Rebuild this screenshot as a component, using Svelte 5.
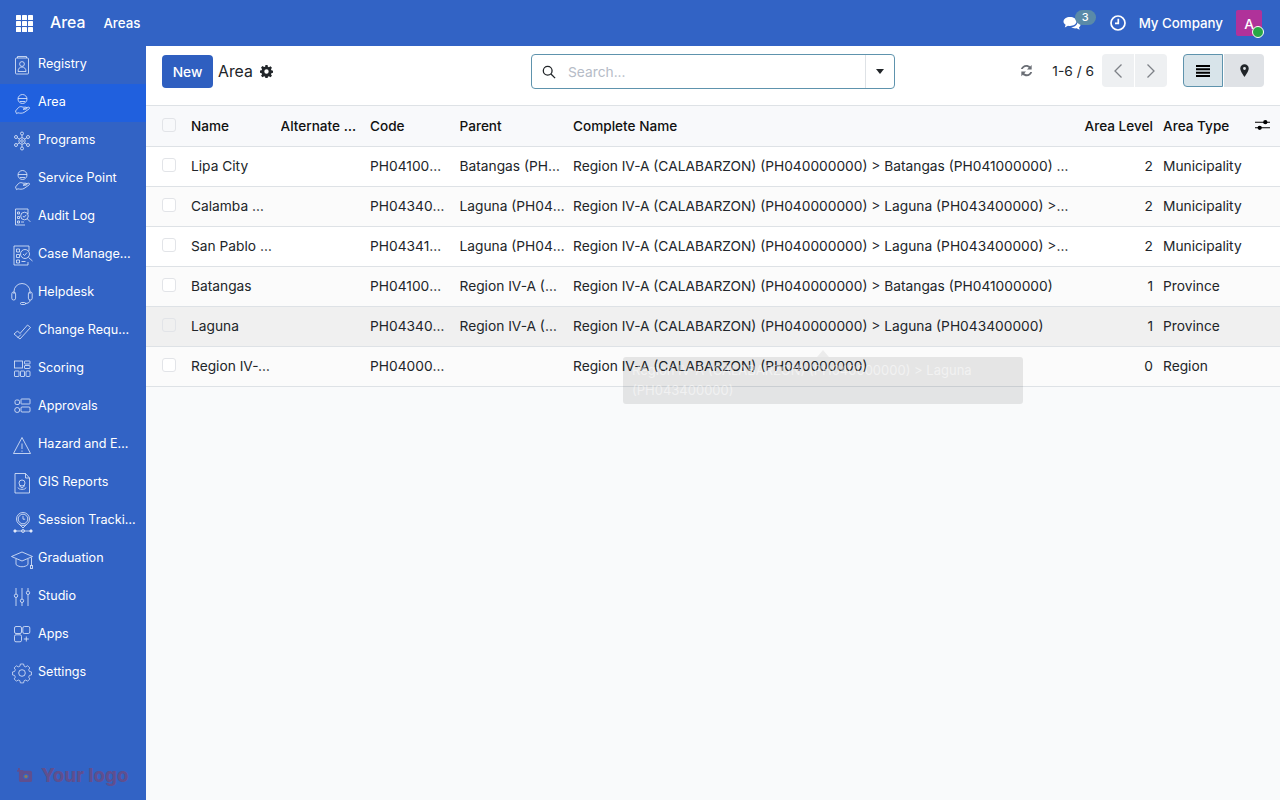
<script lang="ts">
	const hand = '<circle cx="12.500" cy="8" r="4.500"/><path d="M8 7.500h9M10 10.500h5"/><path d="M5.500 20l3-3.500c1.500-1.200 3-1 4.500-.3h3c1.200 0 1.200 2 0 2h-3l5-2c1.500-.5 2.200 1 1 1.800l-5 3.500c-2 1-4 .8-6 .3l-1.500.8z"/>';

	const menu = [
		{ label: 'Registry', icon: '<rect x="5.5" y="5" width="13" height="16" rx="1"/><path d="M7.500 5V3.500h9V5"/><circle cx="12" cy="11" r="2.400"/><path d="M8 18.500c0-3 1.800-4.500 4-4.500s4 1.500 4 4.500z"/>' },
		{ label: 'Area', active: true, icon: hand },
		{ label: 'Programs', icon: '<circle cx="12" cy="12" r="3.200"/><circle cx="12" cy="12" r="1.300"/><circle cx="12" cy="4.500" r="1.500"/><circle cx="12" cy="19.500" r="1.500"/><circle cx="6" cy="8" r="1.500"/><circle cx="18" cy="8" r="1.500"/><circle cx="6" cy="16" r="1.500"/><circle cx="18" cy="16" r="1.500"/><path d="M12 6v3M12 15v3M7.300 8.800l2 1.300M16.700 8.800l-2 1.300M7.300 15.200l2-1.300M16.700 15.200l-2-1.300"/>' },
		{ label: 'Service Point', icon: hand },
		{ label: 'Audit Log', icon: '<path d="M18 9V4H5.500v16H15"/><path d="M7.500 7h2v2h-2zM7.500 11.500h2v2h-2zM7.500 16h2v2h-2zM11 17h3"/><circle cx="14.500" cy="11" r="3.800"/><path d="M12.900 11l1.200 1.300 2.200-2.500M17.300 13.800l3 3"/>' },
		{ label: 'Case Management', icon: '<path d="M19 8V3H4v19h14v-3"/><path d="M6.500 6h3v3h-3zM6.500 11.500h3v3h-3zM6.500 17h3v3h-3zM11.500 18.500h4"/><circle cx="15" cy="11" r="4.500"/><path d="M13 11l1.500 1.500 2.500-3M18.500 14.500l4 3.500"/>' },
		{ label: 'Helpdesk', icon: '<path d="M4 13V10.500a8 8 0 0 1 16 0V13"/><rect x="1.800" y="11" width="3.800" height="8" rx="1.800"/><rect x="18.400" y="11" width="3.800" height="8" rx="1.800"/><path d="M20 19c0 2.500-2 3.500-5 3.500"/><rect x="10.500" y="21.500" width="5" height="2" rx="1"/>' },
		{ label: 'Change Requests', icon: '<path d="M4 15l3.500-3 2.500 2.500 7.500-8.500 3 2.500L10 20z"/><path d="M7.500 19l3.500-3.500"/>' },
		{ label: 'Scoring', icon: '<rect x="4.500" y="4" width="8" height="7"/><rect x="14.500" y="4" width="5.500" height="3" rx=".5"/><rect x="14.500" y="8.500" width="5.500" height="3" rx=".5"/><rect x="4.500" y="14" width="4.500" height="5.500" rx=".5"/><rect x="10.500" y="14" width="4" height="5.500" rx=".5"/><rect x="16" y="14" width="4" height="5.500" rx="1"/>' },
		{ label: 'Approvals', icon: '<rect x="5" y="5" width="4.500" height="4.500" rx="1.500"/><rect x="11" y="4" width="9" height="5" rx=".5"/><circle cx="7.200" cy="15" r="2.500"/><rect x="11" y="12" width="9" height="5" rx="1"/>' },
		{ label: 'Hazard and Emergency', icon: '<path d="M12 4.500L3.500 20.500h17z"/><path d="M12 10.500v5.500M12 17.500v1.300"/>' },
		{ label: 'GIS Reports', icon: '<path d="M5 2.500h10.500l4 4.500v15H5zM15.500 2.500V7h4"/><circle cx="12" cy="12" r="3"/><path d="M12 17l-3-2.500M12 17l3-2.500M8 16.500c0 2.500 8 2.500 8 0"/>' },
		{ label: 'Session Tracking', icon: '<circle cx="13" cy="10" r="6.500"/><circle cx="13" cy="10" r="4.800"/><path d="M13 7v3.200h2.200M9.500 15.500l3.500 3.500 3.500-3.500M5 22h16"/><circle cx="5" cy="22" r="1.200" fill="#e4ebfa"/><circle cx="13" cy="22" r="1.500"/><circle cx="21" cy="22" r="1.200" fill="#e4ebfa"/>' },
		{ label: 'Graduation', icon: '<path d="M1.500 9.500L12 5l10.500 4.500L12 14zM6 12v5.500c3 3 9 3 12 0V12M21.500 10.500v8"/><rect x="20.500" y="18.500" width="2" height="3"/>' },
		{ label: 'Studio', icon: '<path d="M6 3v6M6 12.500V21M12 3v11M12 17.500V21M18 3v3M18 9.500V21"/><circle cx="6" cy="10.800" r="1.700"/><circle cx="12" cy="15.800" r="1.700"/><circle cx="18" cy="7.800" r="1.700"/>' },
		{ label: 'Apps', icon: '<rect x="4.500" y="3.500" width="7" height="7" rx="1.500"/><rect x="12.800" y="3.500" width="7" height="7" rx="1.500"/><rect x="4.500" y="11.800" width="7" height="7" rx="1.500"/><path d="M16.300 13.500v5M13.800 16h5"/>' },
		{ label: 'Settings', icon: '<circle cx="12" cy="12" r="3.300"/><path d="M10.200 4h3.600l.5 2.400 1.900.8 2-1.300 2.500 2.500-1.300 2 .8 1.900 2.300.5v3.400l-2.300.5-.8 1.900 1.300 2-2.500 2.500-2-1.300-1.900.8-.5 2.400h-3.600l-.5-2.400-1.900-.8-2 1.300-2.500-2.500 1.300-2-.8-1.900-2.300-.5v-3.400l2.300-.5.8-1.900-1.300-2 2.500-2.500 2 1.300 1.900-.8z" transform="translate(1.200 -.6) scale(.9)"/>' }
	];

	const rows = [
		{ name: 'Lipa City', code: 'PH041000000', parent: 'Batangas (PH041000000)', full: 'Region IV-A (CALABARZON) (PH040000000) > Batangas (PH041000000) > Lipa City (PH041014000)', level: 2, type: 'Municipality' },
		{ name: 'Calamba City', code: 'PH043400000', parent: 'Laguna (PH043400000)', full: 'Region IV-A (CALABARZON) (PH040000000) > Laguna (PH043400000) > Calamba City (PH043405000)', level: 2, type: 'Municipality' },
		{ name: 'San Pablo City', code: 'PH043412000', parent: 'Laguna (PH043400000)', full: 'Region IV-A (CALABARZON) (PH040000000) > Laguna (PH043400000) > San Pablo City (PH043412000)', level: 2, type: 'Municipality' },
		{ name: 'Batangas', code: 'PH041000000', parent: 'Region IV-A (CALABARZON)', full: 'Region IV-A (CALABARZON) (PH040000000) > Batangas (PH041000000)', level: 1, type: 'Province' },
		{ name: 'Laguna', code: 'PH043400000', parent: 'Region IV-A (CALABARZON)', full: 'Region IV-A (CALABARZON) (PH040000000) > Laguna (PH043400000)', level: 1, type: 'Province', hover: true },
		{ name: 'Region IV-A (CALABARZON)', code: 'PH040000000', parent: '', full: 'Region IV-A (CALABARZON) (PH040000000)', level: 0, type: 'Region' }
	];
</script>

<div class="app">
	<header class="navbar">
		<svg class="apps" viewBox="0 0 17 17" width="17" height="17" fill="#fff">
			{#each [0, 6, 12] as y}
				{#each [0, 6, 12] as x}
					<rect {x} {y} width="5" height="5" rx=".6" />
				{/each}
			{/each}
		</svg>
		<span class="brand">Area</span>
		<span class="navlink">Areas</span>
		<div class="systray">
			<div class="chat">
				<svg viewBox="0 0 18 15" width="18" height="15" fill="#fff">
					<path d="M7 1c3.600 0 6.500 2 6.500 4.600S10.600 10 7 10c-.8 0-1.400 0-2-.2L1.800 11.500l.8-2.700C1.200 8 .5 6.900.5 5.600.5 3 3.400 1 7 1z" />
					<path d="M14.500 5.500c1.800.6 3 1.800 3 3.300 0 1-.6 1.900-1.500 2.500l.7 2.500-3.200-1.500c-2 .3-4-.2-5.300-1.200 3.300.1 6.500-2 6.300-5.600z" />
				</svg>
				<span class="badge">3</span>
			</div>
			<svg class="clock" viewBox="0 0 16 16" width="16" height="16" fill="none" stroke="#fff" stroke-width="1.700">
				<circle cx="8" cy="8" r="7" />
				<path d="M8.300 3.800v4.600H5" />
			</svg>
			<span class="company">My Company</span>
			<div class="avatar">A<span class="online"></span></div>
		</div>
	</header>

	<div class="body">
		<nav class="sidebar">
			{#each menu as item}
				<div class="item" class:active={item.active}>
					<svg viewBox="0 0 24 24" width="24" height="24" fill="none" stroke="#e4ebfa" stroke-width=".9" stroke-opacity=".9">
						{@html item.icon}
					</svg>
					<span>{item.label}</span>
				</div>
			{/each}
			<div class="logo">
				<svg viewBox="0 0 18 16" width="17" height="15" fill="#5f4f8f">
					<path fill-rule="evenodd" d="M1 0h2v2h3l1 1h7a2 2 0 0 1 2 2v8a2 2 0 0 1-2 2H4a2 2 0 0 1-2-2V4H0V2h1zM9.500 6a3 3 0 1 0 0 6 3 3 0 0 0 0-6z" />
					<circle cx="9.500" cy="9" r="1.800" fill="#8d7a5e" />
				</svg>
				<span>Your logo</span>
			</div>
		</nav>

		<main class="content">
			<div class="panel">
				<div class="panel-left">
					<button class="new">New</button>
					<span class="title">Area</span>
					<svg viewBox="0 0 16 16" width="13" height="13" fill="#212529">
						<path fill-rule="evenodd" d="M6.700 0h2.600l.4 2.200 1.300.6 1.900-1.300 1.800 1.900-1.200 1.900.5 1.300 2.200.4v2.600l-2.200.4-.5 1.300 1.200 1.900-1.800 1.900-1.900-1.300-1.300.6-.4 2.200H6.700l-.4-2.200-1.300-.6-1.900 1.300-1.800-1.900 1.200-1.900-.5-1.300L-.2 9.400V6.800L2 6.400l.5-1.300-1.200-1.900 1.800-1.900L5 2.600l1.300-.6zM8 5.300a2.700 2.700 0 1 0 0 5.400 2.700 2.700 0 0 0 0-5.400z" />
					</svg>
				</div>
				<div class="search">
					<svg viewBox="0 0 16 16" width="14" height="14" fill="none" stroke="#212529" stroke-width="1.500">
						<circle cx="6.500" cy="6.500" r="5" />
						<path d="M10.200 10.200L15 15" />
					</svg>
					<span class="placeholder">Search...</span>
					<div class="search-drop"><span class="caret"></span></div>
				</div>
				<div class="panel-right">
					<svg class="refresh" viewBox="0 0 16 16" width="15" height="15" fill="#6a6e75">
						<path d="M2 6.500C2.700 3.700 5 2 7.800 2c1.600 0 3 .6 4.100 1.600L13.500 2v5h-5l1.900-1.900A4 4 0 0 0 7.800 4C6 4 4.600 5 4 6.500zM14 9.500c-.7 2.800-3 4.500-5.800 4.500-1.600 0-3-.6-4.100-1.600L2.500 14V9h5l-1.900 1.900A4 4 0 0 0 8.200 12c1.800 0 3.200-1 3.800-2.500z" />
					</svg>
					<span class="pager">1-6 / 6</span>
					<div class="arrows">
						<button aria-label="Previous">
							<svg viewBox="0 0 10 16" width="10" height="16" fill="none" stroke="#7d8187" stroke-width="1.300"><path d="M8.500 1.500L2 8l6.500 6.500" /></svg>
						</button>
						<button aria-label="Next">
							<svg viewBox="0 0 10 16" width="10" height="16" fill="none" stroke="#7d8187" stroke-width="1.300"><path d="M1.500 1.500L8 8l-6.500 6.500" /></svg>
						</button>
					</div>
					<div class="views">
						<button class="view on" aria-label="List">
							<svg viewBox="0 0 14 12" width="14" height="12" fill="#000"><path d="M0 0h14v2H0zM0 3.300h14v2H0zM0 6.700h14v2H0zM0 10h14v2H0z" /></svg>
						</button>
						<button class="view" aria-label="Map">
							<svg viewBox="0 0 10 14" width="9" height="13" fill="#212529"><path fill-rule="evenodd" d="M5 0a4.700 4.700 0 0 1 4.700 4.700C9.700 8 5 14 5 14S.3 8 .3 4.700A4.700 4.700 0 0 1 5 0zm0 3.200a1.600 1.600 0 1 0 0 3.200 1.600 1.600 0 0 0 0-3.200z" /></svg>
						</button>
					</div>
				</div>
			</div>

			<table>
				<colgroup>
					<col class="c-check" />
					<col class="c-text" />
					<col class="c-text" />
					<col class="c-text" />
					<col class="c-parent" />
					<col />
					<col class="c-level" />
					<col class="c-type" />
					<col class="c-opt" />
				</colgroup>
				<thead>
					<tr>
						<th class="check"><span class="box"></span></th>
						<th>Name</th>
						<th>Alternate Name</th>
						<th>Code</th>
						<th>Parent</th>
						<th>Complete Name</th>
						<th class="num">Area Level</th>
						<th class="type">Area Type</th>
						<th class="opt">
							<svg viewBox="0 0 16 12" width="15" height="12" fill="#000">
								<path d="M0 2.500h16v1.200H0zM0 8.300h16v1.200H0z" />
								<circle cx="11" cy="3" r="2.300" />
								<circle cx="5" cy="9" r="2.300" />
							</svg>
						</th>
					</tr>
				</thead>
				<tbody>
					{#each rows as row}
						<tr class:hover={row.hover}>
							<td class="check"><span class="box"></span></td>
							<td>{row.name}</td>
							<td></td>
							<td class="code">{row.code}</td>
							<td>{row.parent}</td>
							<td class="full">{row.full}</td>
							<td class="num">{row.level}</td>
							<td class="type">{row.type}</td>
							<td></td>
						</tr>
					{/each}
				</tbody>
			</table>

			<div class="tooltip">
				<span class="tip-arrow"></span>
				Region IV-A (CALABARZON) (PH040000000) &gt; Laguna (PH043400000)
			</div>
		</main>
	</div>
</div>

<style>
	:global(body) {
		margin: 0;
		font-family: Inter, 'Noto Sans', sans-serif;
		font-size: 13.75px;
		color: #212529;
	}

	button {
		font-family: inherit;
		border: 0;
		padding: 0;
		cursor: pointer;
	}

	.app {
		height: 100vh;
		display: flex;
		flex-direction: column;
		overflow: hidden;
	}

	.navbar {
		height: 46px;
		flex: none;
		background: #3263c5;
		color: #fff;
		display: flex;
		align-items: center;
		padding-left: 16px;
	}

	.brand {
		margin: -1px 0 0 17px;
		font-size: 15.8px;
		font-weight: 500;
	}

	.navlink {
		margin: -1px 0 0 18px;
		font-size: 13.3px;
		font-weight: 500;
	}

	.systray {
		margin-left: auto;
		display: flex;
		align-items: center;
		padding-right: 18px;
	}

	.chat {
		position: relative;
		width: 33px;
		height: 15px;
		margin-top: 1px;
	}

	.badge {
		position: absolute;
		left: 12px;
		top: -6px;
		width: 21px;
		height: 15px;
		border-radius: 8px;
		background: #5a8aa8;
		font-size: 11px;
		font-weight: 500;
		line-height: 15px;
		text-align: center;
	}

	.clock {
		margin-left: 14px;
	}

	.company {
		margin: -1px 0 0 13px;
		font-size: 13.3px;
		font-weight: 500;
	}

	.avatar {
		position: relative;
		margin-left: 13px;
		width: 26px;
		height: 26px;
		border-radius: 2px;
		background: #b0329a;
		text-align: center;
		line-height: 28px;
		font-weight: 500;
	}

	.online {
		position: absolute;
		right: -2px;
		bottom: -2px;
		width: 10px;
		height: 10px;
		border-radius: 50%;
		background: #28a745;
		border: 1px solid #fff;
	}

	.body {
		flex: 1;
		display: flex;
		min-height: 0;
	}

	.sidebar {
		position: relative;
		width: 146px;
		flex: none;
		background: #3263c5;
		color: #fff;
		font-size: 12.6px;
	}

	.item {
		height: 38px;
		display: flex;
		align-items: center;
		gap: 4px;
		padding-left: 10px;
	}

	.item span {
		width: 98px;
		margin-top: -4px;
		white-space: nowrap;
		overflow: hidden;
		text-overflow: ellipsis;
	}

	.item.active {
		background: #2060de;
	}

	.logo {
		position: absolute;
		left: 17px;
		bottom: 13px;
		display: flex;
		align-items: center;
		gap: 7px;
		color: #5f4f8f;
		font-size: 18.7px;
		font-weight: 800;
	}

	.content {
		position: relative;
		flex: 1;
		min-width: 0;
		background: #f9fafb;
	}

	.panel {
		height: 59px;
		background: #fff;
		border-bottom: 1px solid #dee2e6;
		display: grid;
		grid-template-columns: 369px 364px 1fr;
		align-items: start;
		padding: 0 16px;
	}

	.panel-left {
		display: flex;
		align-items: center;
		margin-top: 9px;
	}

	.new {
		width: 51px;
		height: 33px;
		background: #2f5fc0;
		color: #fff;
		border-radius: 4px;
		font-size: 13.75px;
		font-weight: 500;
	}

	.title {
		margin: -1px 7px 0 5px;
		font-size: 15.8px;
	}

	.search {
		box-sizing: border-box;
		height: 35px;
		margin-top: 8px;
		border: 1px solid #5e93ad;
		border-radius: 4px;
		display: flex;
		align-items: center;
		padding-left: 10px;
	}

	.placeholder {
		margin-left: 12px;
		color: #b6bcc7;
	}

	.search-drop {
		margin-left: auto;
		width: 28px;
		height: 100%;
		border-left: 1px solid #dee2e6;
		display: flex;
		align-items: center;
		justify-content: center;
	}

	.caret {
		border-top: 5px solid #212529;
		border-left: 4.5px solid transparent;
		border-right: 4.5px solid transparent;
	}

	.panel-right {
		display: flex;
		align-items: center;
		justify-content: flex-end;
		margin-top: 8px;
	}

	.refresh {
		margin-right: 18px;
	}

	.pager {
		margin-right: 8px;
	}

	.arrows {
		display: flex;
		gap: 1px;
		margin-right: 16px;
	}

	.arrows button {
		width: 32px;
		height: 33px;
		background: #eef0f2;
		display: flex;
		align-items: center;
		justify-content: center;
	}

	.arrows button:first-child {
		border-radius: 4px 0 0 4px;
	}

	.arrows button:last-child {
		border-radius: 0 4px 4px 0;
	}

	.views {
		display: flex;
		gap: 1px;
	}

	.view {
		width: 40px;
		height: 33px;
		background: #dfe2e6;
		border-radius: 0 4px 4px 0;
		display: flex;
		align-items: center;
		justify-content: center;
	}

	.view.on {
		background: #d8e4ea;
		border: 1px solid #5e93ad;
		border-radius: 4px 0 0 4px;
	}

	table {
		width: 100%;
		table-layout: fixed;
		border-collapse: collapse;
		background: #fff;
	}

	.c-check { width: 45px; }
	.c-text { width: 89.5px; }
	.c-parent { width: 113.5px; }
	.c-level { width: 88px; }
	.c-type { width: 90px; }
	.c-opt { width: 27px; }

	th, td {
		height: 38px;
		padding: 0 8px 1px 0;
		text-align: left;
		white-space: nowrap;
		overflow: hidden;
		text-overflow: ellipsis;
		border-bottom: 1px solid #dee2e6;
		font-size: 13.75px;
		color: #212529;
	}

	th {
		height: 39px;
		background: #f8f9fb;
		font-size: 13.6px;
		font-weight: 500;
		color: #111;
	}

	tbody tr:nth-child(even) td {
		background: #fbfbfb;
	}

	.check {
		padding: 0 0 1px 16px;
	}

	.box {
		display: block;
		width: 12px;
		height: 12px;
		border: 1px solid #e2e4e8;
		border-radius: 3px;
		background: #fff;
		margin-bottom: 2px;
	}

	th .box {
		background: #f8f9fb;
	}

	.code {
		padding-right: 12px;
	}

	.full {
		padding-right: 4px;
	}

	.num {
		text-align: right;
		padding-right: 10px;
	}

	.type {
		padding-right: 0;
	}

	.opt {
		padding: 0 0 0 2px;
		overflow: visible;
	}

	tbody tr.hover td {
		background: #f0f0f0;
	}

	tr.hover .box {
		background: #f0f0f0;
	}

	.tooltip {
		position: absolute;
		left: 477px;
		top: 311px;
		box-sizing: border-box;
		width: 400px;
		height: 47px;
		padding: 3px 9px;
		border-radius: 3px;
		background: rgba(0, 0, 0, 0.085);
		color: rgba(255, 255, 255, 0.5);
		font-size: 13px;
		line-height: 20px;
	}

	.tip-arrow {
		position: absolute;
		left: 194px;
		top: -7px;
		border-bottom: 7px solid rgba(0, 0, 0, 0.06);
		border-left: 6px solid transparent;
		border-right: 6px solid transparent;
	}
</style>
